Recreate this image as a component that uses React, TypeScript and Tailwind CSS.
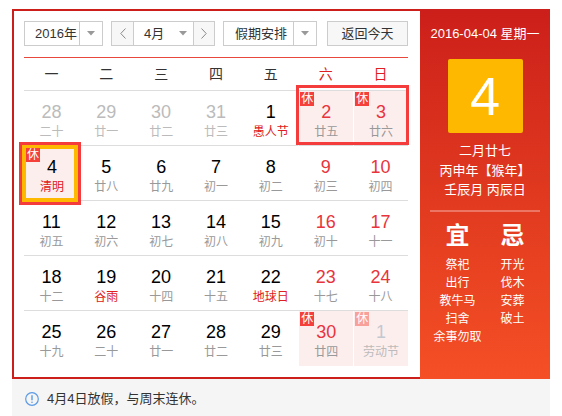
import React from "react";

type Day = {
  n: number;
  l: string;
  other?: boolean;
  weekend?: boolean;
  fest?: boolean;
  rest?: boolean;
  today?: boolean;
};

const rows: Day[][] = [
  [
    { n: 28, l: "二十", other: true },
    { n: 29, l: "廿一", other: true },
    { n: 30, l: "廿二", other: true },
    { n: 31, l: "廿三", other: true },
    { n: 1, l: "愚人节", fest: true },
    { n: 2, l: "廿五", weekend: true, rest: true },
    { n: 3, l: "廿六", weekend: true, rest: true },
  ],
  [
    { n: 4, l: "清明", fest: true, rest: true, today: true },
    { n: 5, l: "廿八" },
    { n: 6, l: "廿九" },
    { n: 7, l: "初一" },
    { n: 8, l: "初二" },
    { n: 9, l: "初三", weekend: true },
    { n: 10, l: "初四", weekend: true },
  ],
  [
    { n: 11, l: "初五" },
    { n: 12, l: "初六" },
    { n: 13, l: "初七" },
    { n: 14, l: "初八" },
    { n: 15, l: "初九" },
    { n: 16, l: "初十", weekend: true },
    { n: 17, l: "十一", weekend: true },
  ],
  [
    { n: 18, l: "十二" },
    { n: 19, l: "谷雨", fest: true },
    { n: 20, l: "十四" },
    { n: 21, l: "十五" },
    { n: 22, l: "地球日", fest: true },
    { n: 23, l: "十七", weekend: true },
    { n: 24, l: "十八", weekend: true },
  ],
  [
    { n: 25, l: "十九" },
    { n: 26, l: "二十" },
    { n: 27, l: "廿一" },
    { n: 28, l: "廿二" },
    { n: 29, l: "廿三" },
    { n: 30, l: "廿四", weekend: true, rest: true },
    { n: 1, l: "劳动节", other: true, rest: true },
  ],
];

const weekdays = ["一", "二", "三", "四", "五", "六", "日"];

function Caret() {
  return (
    <svg width="8" height="5" viewBox="0 0 8 5">
      <path d="M0 0h8L4 4.5z" fill="#999" />
    </svg>
  );
}

function Chevron({ dir }: { dir: "l" | "r" }) {
  return (
    <svg width="6" height="11" viewBox="0 0 6 11">
      <path
        d={dir === "l" ? "M5.5 0.5L0.8 5.5l4.7 5" : "M0.5 0.5l4.7 5-4.7 5"}
        fill="none"
        stroke="#888"
        strokeWidth="1"
      />
    </svg>
  );
}

function Cell({ d, last }: { d: Day; last: boolean }) {
  let numColor = "text-black";
  if (d.other) numColor = d.rest ? "text-[#c3c8d0]" : "text-[#bbbbbb]";
  else if (d.weekend) numColor = "text-[#e8343c]";
  let lunarColor = "text-[#999999]";
  if (d.other) lunarColor = "text-[#bbbbbb]";
  else if (d.fest) lunarColor = "text-[#e02020]";
  return (
    <div
      className={`relative h-[55px] flex flex-col items-center ${last ? "" : "border-b border-[#dddddd]"} ${
        d.rest ? "bg-[#fdeeee] border-l border-l-white" : ""
      }`}
    >
      {d.rest && (
        <span
          className={`absolute z-10 ${d.today ? "left-[1px] top-[2px]" : "left-[1px] top-[1px]"} w-[14px] h-[14px] text-[12px] leading-[14px] text-center text-white ${
            d.other ? "bg-[#f8a09a]" : "bg-[#f43f3a]"
          }`}
        >
          休
        </span>
      )}
      <span className={`mt-[11px] text-[18px] leading-[20px] ${numColor}`}>{d.n}</span>
      <span className={`mt-[3px] text-[12px] leading-[14px] ${lunarColor}`}>{d.l}</span>
    </div>
  );
}

export default function App() {
  return (
    <div
      className="w-[562px] h-[416px] bg-white pl-[12px] pt-[9px] text-[#333]"
      style={{ fontFamily: '"Liberation Sans", Arial, "Noto Sans CJK SC", sans-serif' }}
    >
      <div className="w-[538px] h-[370px] flex">
        {/* left: calendar */}
        <div className="w-[408px] h-[370px] border-l-2 border-t-2 border-b-2 border-[#cc1e1a] pl-[10px] pr-[12px] pt-[10px]">
          <div className="flex h-[25px] text-[13px]">
            <div className="w-[79px] flex border border-[#cccccc]">
              <span className="w-[55px] pl-[10px] leading-[23px] border-r border-[#cccccc]">2016年</span>
              <span className="flex-1 flex items-center justify-center">
                <Caret />
              </span>
            </div>
            <div className="ml-[8px] w-[104px] flex border border-[#cccccc]">
              <span className="w-[22px] flex items-center justify-center bg-[#f7f7f7] border-r border-[#cccccc]">
                <Chevron dir="l" />
              </span>
              <span className="w-[60px] flex items-center pl-[10px] border-r border-[#cccccc]">
                <span className="leading-[23px]">4月</span>
                <span className="ml-[15px] flex">
                  <Caret />
                </span>
              </span>
              <span className="flex-1 flex items-center justify-center bg-[#f7f7f7]">
                <Chevron dir="r" />
              </span>
            </div>
            <div className="ml-[8px] w-[94px] flex border border-[#cccccc]">
              <span className="w-[70px] pl-[11px] leading-[23px] border-r border-[#cccccc]">假期安排</span>
              <span className="flex-1 flex items-center justify-center">
                <Caret />
              </span>
            </div>
            <div className="ml-[10px] w-[81px] border border-[#cccccc] bg-[#f7f7f7] text-center leading-[23px]">
              返回今天
            </div>
          </div>

          <div className="mt-[11px] h-px bg-[#e8473c]" />

          <div className="grid grid-cols-7 h-[33px] border-b border-[#dddddd] text-[14px]">
            {weekdays.map((w, i) => (
              <div
                key={w}
                className={`flex items-center justify-center ${i >= 5 ? "text-[#e02020]" : "text-[#333]"}`}
              >
                {w}
              </div>
            ))}
          </div>

          <div className="relative grid grid-cols-7">
            {rows.map((r, ri) =>
              r.map((d, ci) => <Cell key={`${ri}-${ci}`} d={d} last={ri === rows.length - 1} />)
            )}
            <div className="absolute left-[272px] top-[-6px] w-[113px] h-[60px] border-[3px] border-[#f43c3c] pointer-events-none" />
            <div className="absolute left-[-5px] top-[51px] w-[62px] h-[63px] border-[3px] border-[#f43c3c] pointer-events-none">
              <div className="w-full h-full border-[4px] border-[#ffb800]" />
            </div>
          </div>
        </div>

        {/* right: day detail */}
        <div className="w-[130px] h-[370px] flex flex-col items-center text-white bg-gradient-to-b from-[#cc1e1a] to-[#f44f25]">
          <div className="mt-[17px] text-[13px] leading-[16px]">2016-04-04 星期一</div>
          <div className="mt-[17px] w-[75px] h-[74px] rounded-[2px] bg-[#ffb800] flex items-center justify-center text-[54px] leading-none">
            4
          </div>
          <div className="mt-[8px] text-[13px] leading-[19.5px] text-center">
            <div>二月廿七</div>
            <div>丙申年【猴年】</div>
            <div>壬辰月 丙辰日</div>
          </div>
          <div className="mt-[10px] w-[110px] h-[2px] bg-white/30" />
          <div className="mt-[10px] w-[110px] flex">
            <div className="flex-1 flex flex-col items-center">
              <div className="text-[24px] leading-[28px] font-bold">宜</div>
              <div className="mt-[6px] text-[12px] leading-[18px] text-center">
                <div>祭祀</div>
                <div>出行</div>
                <div>教牛马</div>
                <div>扫舍</div>
                <div>余事勿取</div>
              </div>
            </div>
            <div className="flex-1 flex flex-col items-center">
              <div className="text-[24px] leading-[28px] font-bold">忌</div>
              <div className="mt-[6px] text-[12px] leading-[18px] text-center">
                <div>开光</div>
                <div>伐木</div>
                <div>安葬</div>
                <div>破土</div>
              </div>
            </div>
          </div>
        </div>
      </div>

      {/* bottom tip */}
      <div className="w-[538px] h-[37px] bg-[#f5f5f5] flex items-center pl-[13px] pt-[3px]">
        <svg width="14" height="14" viewBox="0 0 14 14">
          <circle cx="7" cy="7" r="6.3" fill="none" stroke="#5b9be6" strokeWidth="1.2" />
          <path d="M7 3.3v5" stroke="#5b9be6" strokeWidth="1.4" />
          <circle cx="7" cy="10.3" r="0.8" fill="#5b9be6" />
        </svg>
        <span className="ml-[8px] text-[13px] text-[#333]">4月4日放假，与周末连休。</span>
      </div>
    </div>
  );
}
